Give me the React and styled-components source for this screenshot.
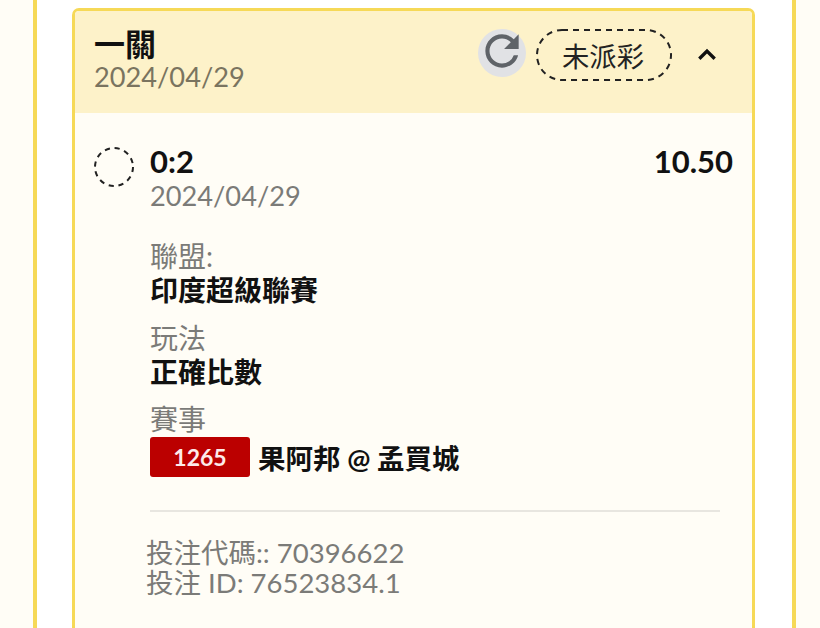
import React from "react";
import styled, { createGlobalStyle } from "styled-components";

const Global = createGlobalStyle`
  html, body { margin: 0; padding: 0; background: #fffdf6; }
  body { font-family: "Lato", "Noto Sans CJK TC", sans-serif; height: 628px; overflow: hidden; }
`;
const Page = styled.div`
  width: 820px; height: 628px; overflow: hidden; padding-left: 33px; box-sizing: border-box;
`;
const Panel = styled.div`
  width: 763px; height: 628px; box-sizing: border-box; background: #fff;
  border-left: 4px solid #f6d957; border-right: 4px solid #f6d957;
  padding: 8px 37px 0 35px;
`;
const Card = styled.div`
  border: 3px solid #f6d957; border-bottom: none; border-radius: 7px 7px 0 0;
  height: 640px; background: #fffdf6; overflow: hidden;
`;
const Header = styled.div`
  height: 102px; box-sizing: border-box; background: #fdf2c9;
  display: flex; align-items: flex-start; padding: 16px 31px 0 19px;
`;
const TitleBlock = styled.div`
  flex: 1; display: flex; flex-direction: column;
`;
const Title = styled.div`
  font-size: 31px; line-height: 34px; font-weight: 700; color: #111;
`;
const HeadDate = styled.div`
  font-size: 27.2px; line-height: 32px; color: #7a745f;
`;
const Actions = styled.div`
  display: flex; align-items: center; margin-top: 2px;
`;
const Refresh = styled.div`
  width: 48px; height: 48px; border-radius: 50%; background: #e1e2e5; margin-bottom: 4px;
  display: flex; align-items: center; justify-content: center;
`;
const RefreshIcon = styled.svg`
  flex: none; margin-bottom: 4px;
`;
const Status = styled.div`
  width: 136px; height: 52px; box-sizing: border-box; margin-left: 10px; padding-right: 2px;
  border-radius: 26px; display: flex; align-items: center; justify-content: center;
  font-size: 27.3px; color: #222; position: relative;
`;
const Dash = styled.svg`
  position: absolute; inset: 0;
`;
const Chevron = styled.svg`
  margin-left: 21px; margin-bottom: 2px;
`;
const Body = styled.div`
  padding: 32px 19px 0 19px;
`;
const Row = styled.div`
  display: flex; align-items: flex-start;
`;
const Circle = styled.svg`
  flex: none; margin-top: 2px;
`;
const Main = styled.div`
  flex: 1; margin-left: 16px; display: flex; flex-direction: column;
`;
const TopLine = styled.div`
  display: flex; justify-content: space-between; margin-top: -1px;
  font-size: 31px; line-height: 34px; font-weight: 700; color: #111;
`;
const Sub = styled.div`
  font-size: 27.2px; line-height: 32px; margin-top: 2px; color: #7b7b78;
`;
const Label = styled.div`
  font-size: 28px; line-height: 32px; color: #7b7b78; margin-top: ${p => p.$top}px;
`;
const Value = styled.div`
  font-size: 28px; line-height: 36px; font-weight: 700; color: #111;
`;
const Match = styled.div`
  display: flex; align-items: center; height: 42px; margin-top: 1px; font-size: 27.5px; font-weight: 700; color: #111;
`;
const Badge = styled.div`
  width: 100px; height: 40px; background: #bb0000; border-radius: 3px; color: #fdeaea;
  display: flex; align-items: center; justify-content: center; font-size: 23px; font-weight: 700; margin-right: 8px;
`;
const Divider = styled.div`
  height: 2px; background: #e8e6e0; margin: 32px 13px 0 0;
`;
const Foot = styled.div`
  margin: 26px 0 0 -4px; display: flex; flex-direction: column;
`;
const FootLine = styled.div`
  font-size: 27.5px; line-height: 30px; height: 30px; color: #7b7b78; white-space: nowrap;
`;

export default function App() {
  return (
    <Page>
      <Global />
      <Panel>
        <Card>
          <Header>
            <TitleBlock>
              <Title>一關</Title>
              <HeadDate>2024/04/29</HeadDate>
            </TitleBlock>
            <Actions>
              <Refresh>
                <RefreshIcon width="50" height="50" viewBox="0 0 24 24" fill="#5f6368">
                  <path d="M17.65 6.35A7.958 7.958 0 0 0 12 4c-4.42 0-7.99 3.58-7.99 8s3.57 8 7.99 8c3.73 0 6.84-2.55 7.73-6h-2.08A5.99 5.99 0 0 1 12 18c-3.31 0-6-2.69-6-6s2.69-6 6-6c1.66 0 3.14.69 4.22 1.78L13 11h7V4l-2.35 2.35z" />
                </RefreshIcon>
              </Refresh>
              <Status>
                <Dash width="136" height="52" viewBox="0 0 136 52">
                  <rect x="1" y="1" width="134" height="50" rx="25" fill="none" stroke="#222" strokeWidth="2" strokeDasharray="6 5" />
                </Dash>
                未派彩
              </Status>
              <Chevron width="28" height="28" viewBox="0 0 24 24" fill="#111">
                <path d="M12 7.6l-7.6 7.5 2 2L12 11.6l5.6 5.5 2-2z" />
              </Chevron>
            </Actions>
          </Header>
          <Body>
            <Row>
              <Circle width="40" height="40" viewBox="0 0 40 40">
                <circle cx="20" cy="20" r="19" fill="none" stroke="#222" strokeWidth="2" strokeDasharray="5.2 4.75" />
              </Circle>
              <Main>
                <TopLine>
                  <span>0:2</span>
                  <span>10.50</span>
                </TopLine>
                <Sub>2024/04/29</Sub>
                <Label $top={28}>聯盟:</Label>
                <Value>印度超級聯賽</Value>
                <Label $top={14}>玩法</Label>
                <Value>正確比數</Value>
                <Label $top={13}>賽事</Label>
                <Match>
                  <Badge>1265</Badge>
                  果阿邦 @ 孟買城
                </Match>
                <Divider />
                <Foot>
                  <FootLine>投注代碼:: 70396622</FootLine>
                  <FootLine>投注 ID: 76523834.1</FootLine>
                </Foot>
              </Main>
            </Row>
          </Body>
        </Card>
      </Panel>
    </Page>
  );
}
